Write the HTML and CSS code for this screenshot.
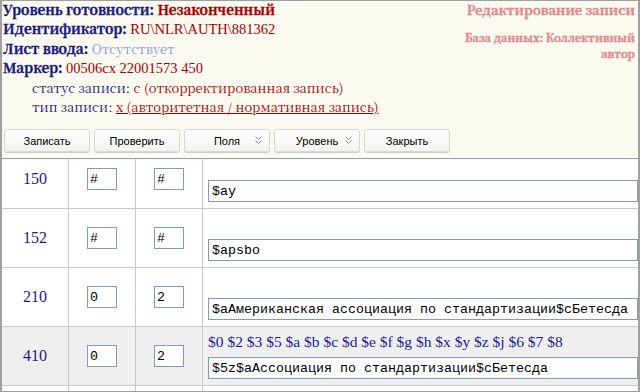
FILE: index.html
```html
<!DOCTYPE html>
<html lang="ru">
<head>
<meta charset="utf-8">
<title>Редактирование записи</title>
<link rel="stylesheet" href="styles.css">
</head>
<body>
<div class="frame">
  <header class="head">
    <div class="info">
      <div class="line"><b class="lbl">Уровень готовности:</b> <b class="val">Незаконченный</b></div>
      <div class="line"><b class="lbl">Идентификатор:</b> <span class="val lat">RU\NLR\AUTH\881362</span></div>
      <div class="line"><b class="lbl">Лист ввода:</b> <span class="none">Отсутствует</span></div>
      <div class="line"><b class="lbl">Маркер:</b> <span class="val lat">00506cx 22001573 450</span></div>
      <div class="line sub"><span class="lbl2">статус записи:</span> <span class="val">c (откорректированная запись)</span></div>
      <div class="line sub"><span class="lbl2">тип записи:</span> <span class="val link">x (авторитетная / нормативная запись)</span></div>
    </div>
    <div class="meta">
      <div class="title">Редактирование записи</div>
      <div class="db">База данных: Коллективный автор</div>
    </div>
  </header>

  <nav class="toolbar">
    <button class="btn">Записать</button>
    <button class="btn">Проверить</button>
    <button class="btn btn-menu">Поля<svg class="chev" width="7" height="9" viewBox="0 0 7 9"><path d="M0.5 0.5 L3.5 3.5 L6.5 0.5 M0.5 4.5 L3.5 7.5 L6.5 4.5" fill="none" stroke="#8a8a8a" stroke-width="1"/></svg></button>
    <button class="btn btn-menu">Уровень<svg class="chev" width="7" height="9" viewBox="0 0 7 9"><path d="M0.5 0.5 L3.5 3.5 L6.5 0.5 M0.5 4.5 L3.5 7.5 L6.5 4.5" fill="none" stroke="#8a8a8a" stroke-width="1"/></svg></button>
    <button class="btn">Закрыть</button>
  </nav>

  <div class="fields">
    <div class="row row-first">
      <div class="cell num">150</div>
      <div class="cell ind"><input class="inp inp-ind" value="#"></div>
      <div class="cell ind"><input class="inp inp-ind" value="#"></div>
      <div class="cell data"><input class="inp inp-data" value="$ay"></div>
    </div>
    <div class="row">
      <div class="cell num">152</div>
      <div class="cell ind"><input class="inp inp-ind" value="#"></div>
      <div class="cell ind"><input class="inp inp-ind" value="#"></div>
      <div class="cell data"><input class="inp inp-data" value="$apsbo"></div>
    </div>
    <div class="row">
      <div class="cell num">210</div>
      <div class="cell ind"><input class="inp inp-ind" value="0"></div>
      <div class="cell ind"><input class="inp inp-ind" value="2"></div>
      <div class="cell data"><input class="inp inp-data" value="$aАмериканская ассоциация по стандартизации$сБетесда"></div>
    </div>
    <div class="row row-alt">
      <div class="cell num">410</div>
      <div class="cell ind"><input class="inp inp-ind" value="0"></div>
      <div class="cell ind"><input class="inp inp-ind" value="2"></div>
      <div class="cell data">
        <div class="hint">$0 $2 $3 $5 $a $b $c $d $e $f $g $h $x $y $z $j $6 $7 $8</div>
        <input class="inp inp-data" value="$5z$aАссоциация по стандартизации$сБетесда">
      </div>
    </div>
    <div class="row">
      <div class="cell num"></div>
      <div class="cell ind"></div>
      <div class="cell ind"></div>
      <div class="cell data"></div>
    </div>
  </div>
</div>
</body>
</html>
```

FILE: styles.css
```css
html, body {
  margin: 0;
  padding: 0;
  background: #fff;
}

.frame {
  width: 640px;
  height: 392px;
  box-sizing: border-box;
  border: 1px solid #a0a0a0;
  border-left-width: 2px;
  border-right-width: 2px;
  overflow: hidden;
  background: #fff;
  font-family: "Liberation Serif", serif;
}

.head {
  background: #fafaf1;
  display: flex;
  justify-content: space-between;
  padding: 0 3px 0 1px;
  font-family: "Noto Serif CJK SC", "Liberation Serif", serif;
}

.info {
  margin-top: -1px;
}

.line {
  height: 19.4px;
  font-size: 13.5px;
  line-height: 19.4px;
  white-space: nowrap;
}

.lbl {
  color: #17177a;
  font-weight: bold;
  -webkit-text-stroke: 0.4px currentColor;
}

.val,
.none,
.lbl2 {
  font-size: 13px;
}

.val {
  color: #a80000;
}

b.val {
  font-size: 13.5px;
  font-weight: bold;
  -webkit-text-stroke: 0.4px currentColor;
}

.lat {
  font-family: "Liberation Serif", serif;
  font-size: 14.5px;
}

.none {
  color: #7f9ade;
}

.sub {
  padding-left: 29px;
}

.lbl2 {
  color: #17177a;
}

.link {
  text-decoration: underline;
}

.meta {
  width: 174px;
  text-align: right;
  font-weight: bold;
  color: #e08686;
  margin-top: -1px;
  -webkit-text-stroke: 0.35px currentColor;
}

.title {
  height: 19.4px;
  font-size: 13px;
  line-height: 19.4px;
  white-space: nowrap;
}

.db {
  font-size: 11px;
  line-height: 16px;
  margin-top: 10px;
}

.toolbar {
  background: #fafaf1;
  display: flex;
  gap: 4px;
  padding: 13px 0 6px 2px;
}

.btn {
  position: relative;
  width: 86px;
  height: 23px;
  box-sizing: border-box;
  border: 1px solid #d8d8d0;
  border-radius: 3px;
  background: linear-gradient(#ffffff, #f3f3ef);
  box-shadow: 0 1px 0 #cfcfc8;
  font-family: "Liberation Sans", Arial, sans-serif;
  font-size: 11px;
  color: #000;
  padding: 0;
  margin: 0;
}

.chev {
  position: absolute;
  right: 7px;
  top: 6px;
}

.fields {
  border-top: 1px solid #7f9fe0;
}

.row {
  display: grid;
  grid-template-columns: 67px 67px 67px 1fr;
  height: 59px;
  box-sizing: border-box;
  border-bottom: 1px solid #c8c8c8;
  background: #fff;
}

.row-first {
  height: 50px;
}

.row-alt {
  background: #efefef;
}

.cell {
  box-sizing: border-box;
  border-right: 1px solid #c8c8c8;
  display: flex;
  align-items: center;
  justify-content: center;
}

.row-first .num,
.row-first .ind {
  align-items: flex-start;
  padding-top: 9px;
}

.num {
  font-size: 16px;
  line-height: 22px;
  color: #1a1a8a;
}

.data {
  border-right: none;
  flex-direction: column;
  align-items: stretch;
  justify-content: flex-end;
  padding: 0 0 6px 5px;
}

.hint {
  font-size: 15.5px;
  line-height: 20px;
  color: #1c1c96;
  margin-bottom: 5px;
  white-space: nowrap;
}

.inp {
  box-sizing: border-box;
  height: 22px;
  border: 1px solid #7f9db9;
  background: #fff;
  font-family: "Liberation Mono", "Courier New", monospace;
  font-size: 13.33px;
  color: #000;
  padding: 0 3px;
  margin: 0;
  outline: none;
}

.inp-ind {
  width: 30px;
  padding: 0 2px;
}

.inp-data {
  width: 100%;
}
```
